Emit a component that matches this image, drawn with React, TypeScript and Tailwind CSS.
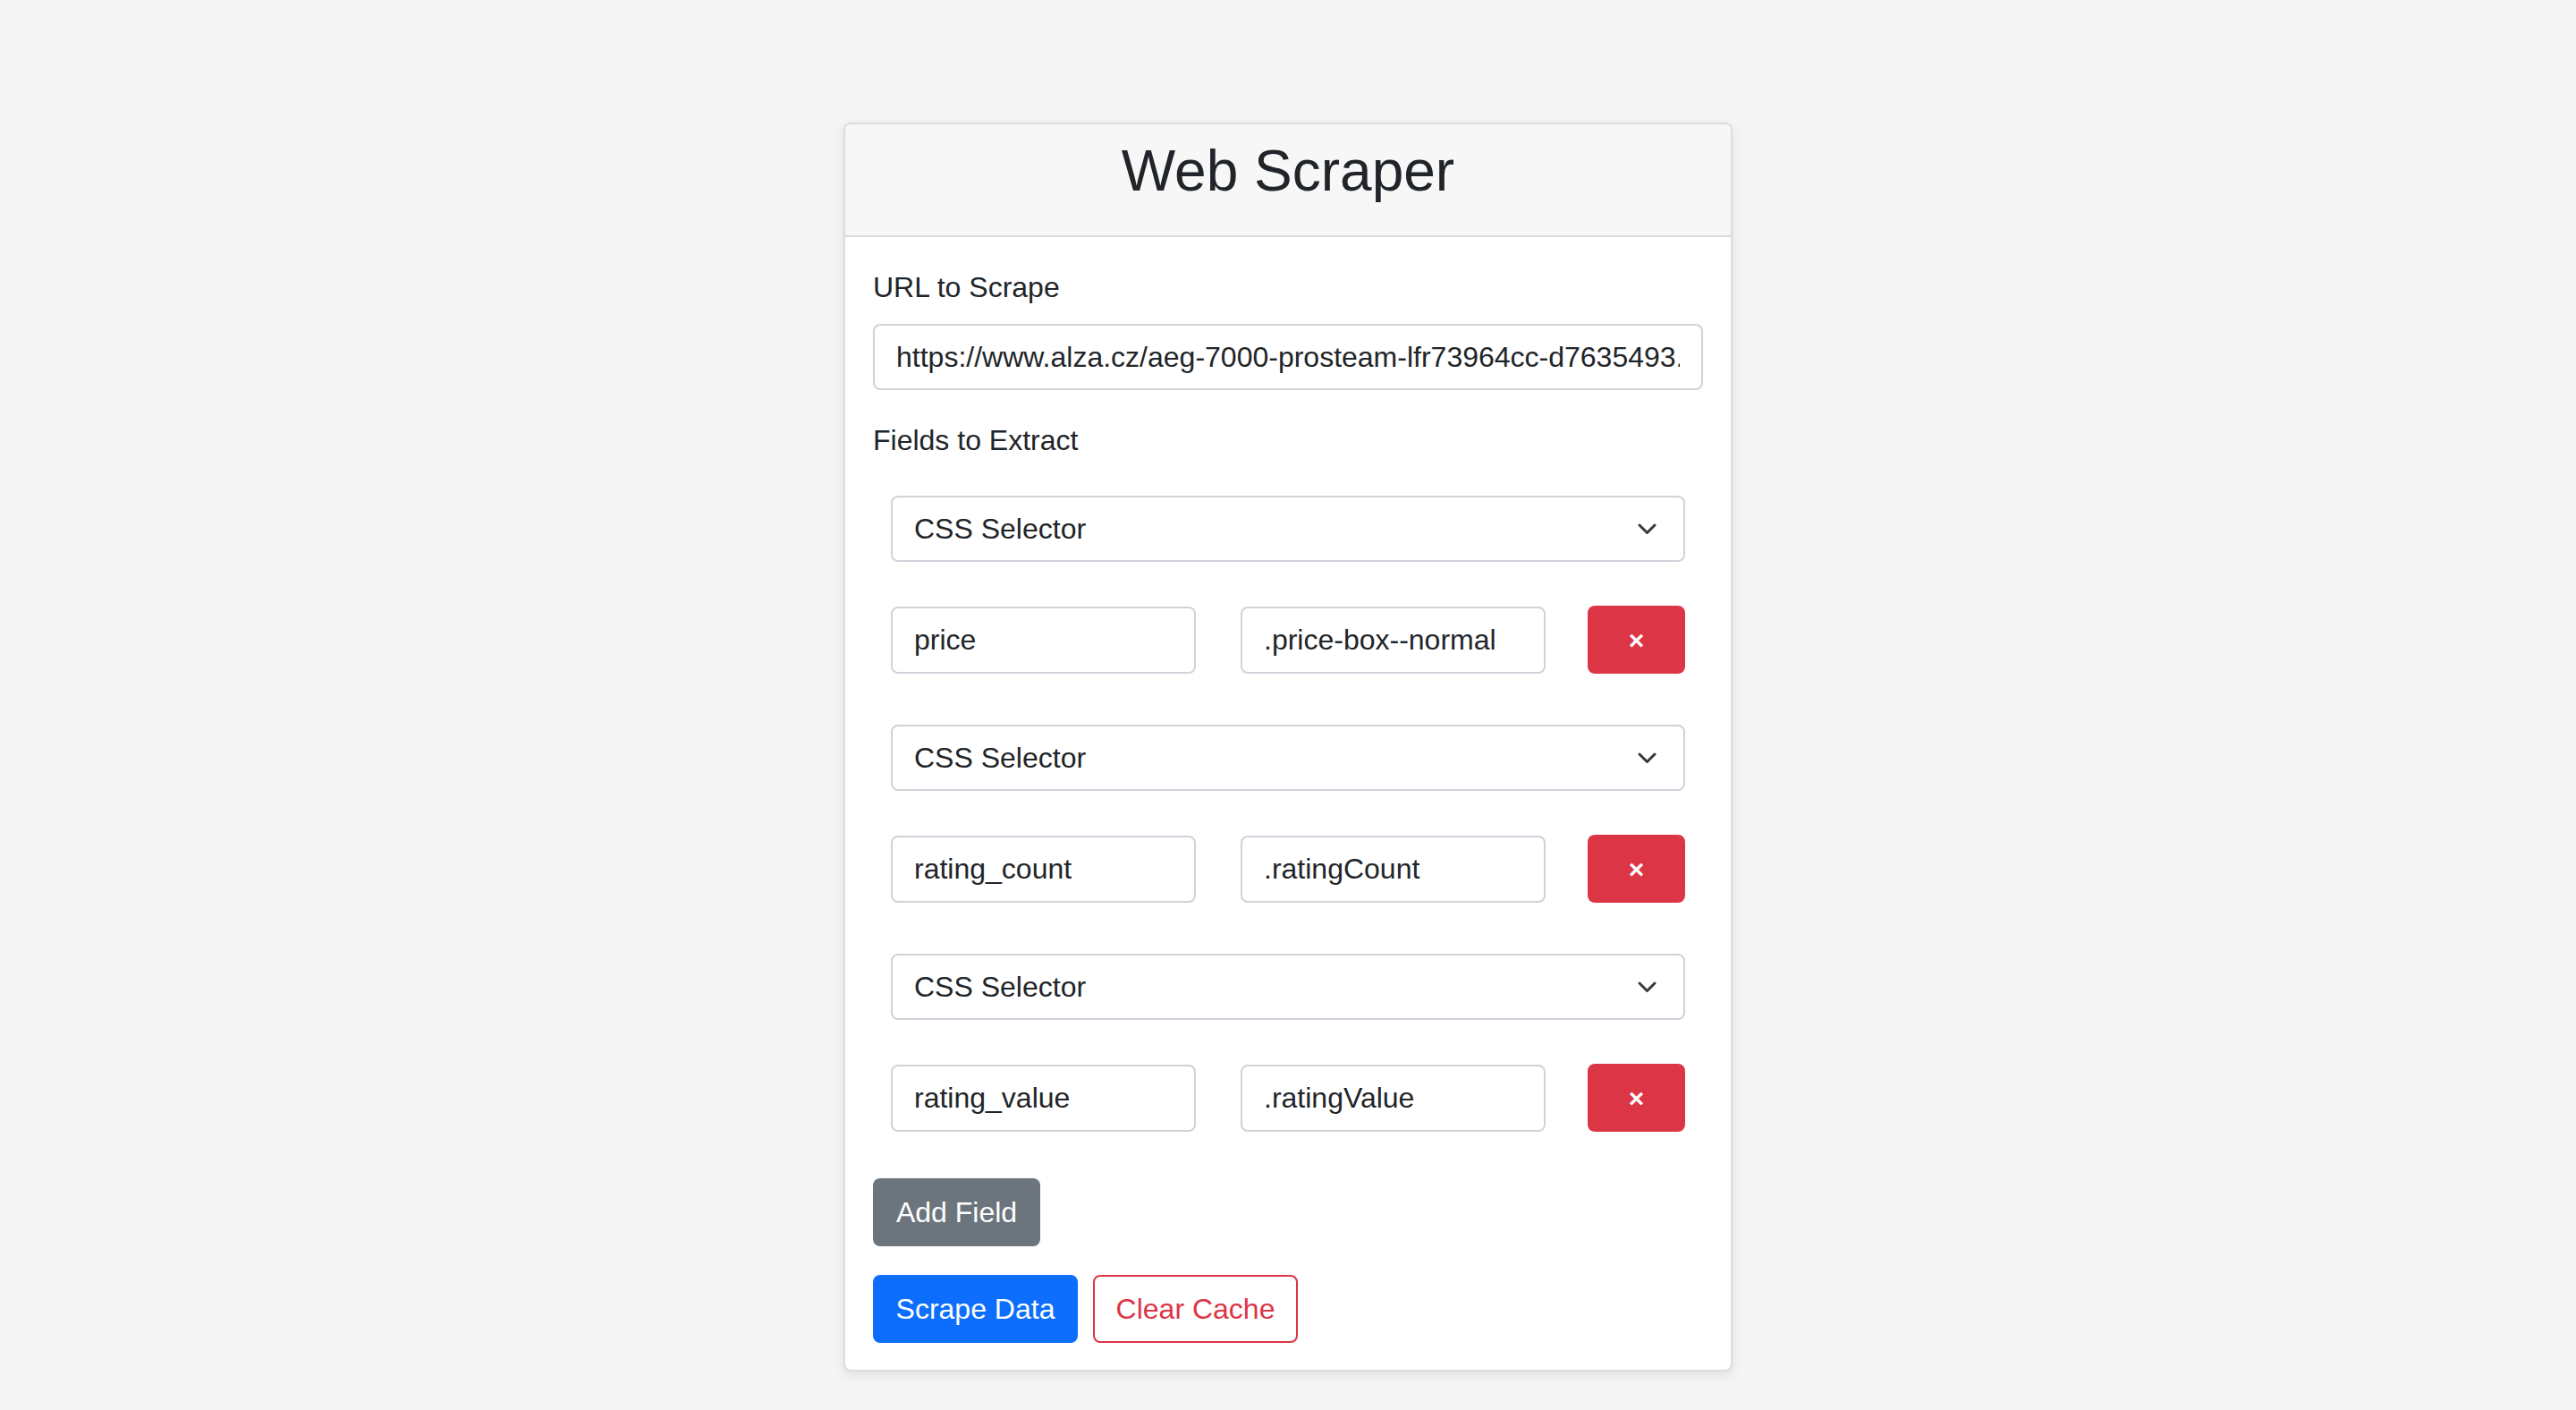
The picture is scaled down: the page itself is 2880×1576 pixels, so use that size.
const fields = [
  { name: "price", selector: ".price-box--normal" },
  { name: "rating_count", selector: ".ratingCount" },
  { name: "rating_value", selector: ".ratingValue" },
];

function SelectBox() {
  return (
    <div className="h-[74px] flex items-center justify-between border-2 border-[#ced4da] rounded-lg bg-white pl-[24px] pr-[30px]">
      <span>CSS Selector</span>
      <svg width="21" height="13" viewBox="0 0 21 13" fill="none">
        <path d="M2 2l8.5 8.5L19 2" stroke="#343a40" strokeWidth="3" strokeLinecap="round" strokeLinejoin="round" />
      </svg>
    </div>
  );
}

function TextInput({ value, className }: { value: string; className?: string }) {
  return (
    <input
      readOnly
      value={value}
      className={
        "h-[75px] border-2 border-[#ced4da] rounded-lg bg-white px-[24px] text-[#212529] outline-none " +
        (className ?? "")
      }
    />
  );
}

export default function App() {
  return (
    <div className="min-h-screen bg-[#f4f4f4] pt-[137px] pb-[40px] font-['Liberation_Sans',Arial,sans-serif] text-[32px] leading-[47px] text-[#212529]">
      <div className="mx-auto w-[994px] bg-white border-2 border-[#dcdcdc] rounded-lg shadow-[0_4px_12px_rgba(0,0,0,0.08)] overflow-hidden">
        <div className="h-[126px] bg-[#f7f7f7] border-b-2 border-[#dadada] flex justify-center pt-[14px]">
          <h1 className="text-[64px] leading-[77px] font-normal">Web Scraper</h1>
        </div>

        <div className="px-[31px] pt-[33px] pb-[30px]">
          <label className="block">URL to Scrape</label>
          <input
            readOnly
            value="https://www.alza.cz/aeg-7000-prosteam-lfr73964cc-d7635493.htm"
            className="mt-[17px] w-full h-[74px] border-2 border-[#ced4da] rounded-lg px-[24px] outline-none text-[#212529]"
          />

          <div className="mt-[33px]">Fields to Extract</div>

          <div className="mx-[20px] mt-[38px] flex flex-col gap-[57px]">
            {fields.map((f) => (
              <div key={f.name}>
                <SelectBox />
                <div className="mt-[49px] flex items-center">
                  <TextInput value={f.name} className="w-[341px]" />
                  <TextInput value={f.selector} className="w-[341px] ml-[50px]" />
                  <button className="ml-auto w-[109px] h-[76px] rounded-lg bg-[#dc3545] text-white font-bold text-[30px] flex items-center justify-center">
                    ×
                  </button>
                </div>
              </div>
            ))}
          </div>

          <button className="mt-[52px] w-[187px] h-[76px] rounded-lg bg-[#6c757d] text-white">
            Add Field
          </button>

          <div className="mt-[32px] flex gap-[17px]">
            <button className="w-[229px] h-[76px] rounded-lg bg-[#0d6efd] text-white">Scrape Data</button>
            <button className="w-[229px] h-[76px] rounded-lg border-2 border-[#dc3545] text-[#dc3545] bg-white">
              Clear Cache
            </button>
          </div>
        </div>
      </div>
    </div>
  );
}
